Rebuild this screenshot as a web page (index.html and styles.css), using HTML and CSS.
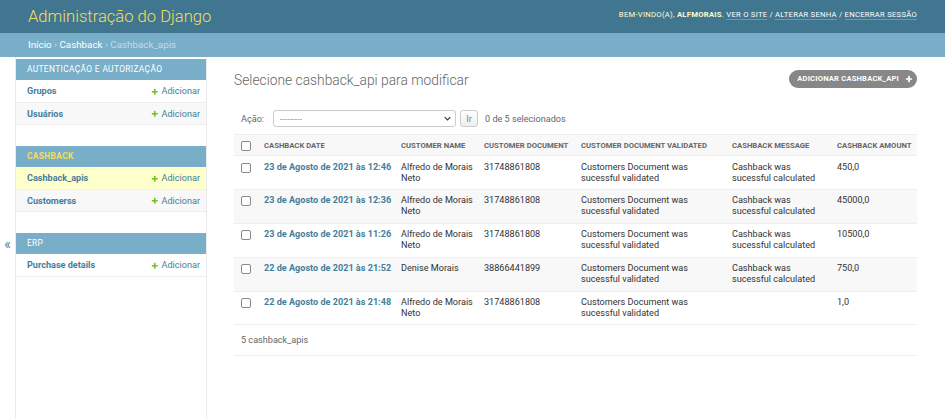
FILE: index.html
```html
<!DOCTYPE html>
<html lang="pt-br">
<head>
<meta charset="utf-8">
<title>Selecione cashback_api para modificar | Administração do Django</title>
<link rel="stylesheet" href="styles.css">
</head>
<body>
<header class="header">
  <h1 class="site-name"><a href="#">Administração do Django</a></h1>
  <div class="user-tools">Bem-vindo(a), <strong>alfmorais</strong>. <a href="#">Ver o site</a> / <a href="#">Alterar senha</a> / <a href="#">Encerrar sessão</a></div>
</header>
<div class="breadcrumbs"><a href="#">Início</a> › <a href="#">Cashback</a> › Cashback_apis</div>
<div class="main">
  <button class="toggle-nav" type="button">«</button>
  <nav class="sidebar">
    <div class="module">
      <div class="caption">Autenticação e Autorização</div>
      <div class="row"><a class="model" href="#">Grupos</a><a class="addlink" href="#"><svg class="plus" viewBox="0 0 1792 1792"><path fill="#70bf2b" d="M1600 796v192q0 40-28 68t-68 28h-416v416q0 40-28 68t-68 28h-192q-40 0-68-28t-28-68v-416h-416q-40 0-68-28t-28-68v-192q0-40 28-68t68-28h416v-416q0-40 28-68t68-28h192q40 0 68 28t28 68v416h416q40 0 68 28t28 68z"/></svg>Adicionar</a></div>
      <div class="row alt"><a class="model" href="#">Usuários</a><a class="addlink" href="#"><svg class="plus" viewBox="0 0 1792 1792"><path fill="#70bf2b" d="M1600 796v192q0 40-28 68t-68 28h-416v416q0 40-28 68t-68 28h-192q-40 0-68-28t-28-68v-416h-416q-40 0-68-28t-28-68v-192q0-40 28-68t68-28h416v-416q0-40 28-68t68-28h192q40 0 68 28t28 68v416h416q40 0 68 28t28 68z"/></svg>Adicionar</a></div>
    </div>
    <div class="module">
      <div class="caption current">Cashback</div>
      <div class="row selected"><a class="model" href="#">Cashback_apis</a><a class="addlink" href="#"><svg class="plus" viewBox="0 0 1792 1792"><path fill="#70bf2b" d="M1600 796v192q0 40-28 68t-68 28h-416v416q0 40-28 68t-68 28h-192q-40 0-68-28t-28-68v-416h-416q-40 0-68-28t-28-68v-192q0-40 28-68t68-28h416v-416q0-40 28-68t68-28h192q40 0 68 28t28 68v416h416q40 0 68 28t28 68z"/></svg>Adicionar</a></div>
      <div class="row alt"><a class="model" href="#">Customerss</a><a class="addlink" href="#"><svg class="plus" viewBox="0 0 1792 1792"><path fill="#70bf2b" d="M1600 796v192q0 40-28 68t-68 28h-416v416q0 40-28 68t-68 28h-192q-40 0-68-28t-28-68v-416h-416q-40 0-68-28t-28-68v-192q0-40 28-68t68-28h416v-416q0-40 28-68t68-28h192q40 0 68 28t28 68v416h416q40 0 68 28t28 68z"/></svg>Adicionar</a></div>
    </div>
    <div class="module">
      <div class="caption">ERP</div>
      <div class="row"><a class="model" href="#">Purchase details</a><a class="addlink" href="#"><svg class="plus" viewBox="0 0 1792 1792"><path fill="#70bf2b" d="M1600 796v192q0 40-28 68t-68 28h-416v416q0 40-28 68t-68 28h-192q-40 0-68-28t-28-68v-416h-416q-40 0-68-28t-28-68v-192q0-40 28-68t68-28h416v-416q0-40 28-68t68-28h192q40 0 68 28t28 68v416h416q40 0 68 28t28 68z"/></svg>Adicionar</a></div>
    </div>
  </nav>
  <div class="content">
    <div class="content-head">
      <h1 class="page-title">Selecione cashback_api para modificar</h1>
      <a class="object-tool" href="#">Adicionar cashback_api<svg class="plus-w" viewBox="0 0 1792 1792"><path fill="#fff" d="M1600 796v192q0 40-28 68t-68 28h-416v416q0 40-28 68t-68 28h-192q-40 0-68-28t-28-68v-416h-416q-40 0-68-28t-28-68v-192q0-40 28-68t68-28h416v-416q0-40 28-68t68-28h192q40 0 68 28t28 68v416h416q40 0 68 28t28 68z"/></svg></a>
    </div>
    <div class="changelist">
      <div class="actions">
        <label class="action-label">Ação:</label>
        <span class="select-wrap">
          <select class="action-select"><option>---------</option></select>
          <svg class="chev" viewBox="0 0 10 6"><path d="M1 1l4 4 4-4" fill="none" stroke="#333" stroke-width="1.6"/></svg>
        </span>
        <button class="go" type="button">Ir</button>
        <span class="counter">0 de 5 selecionados</span>
      </div>
      <table class="results">
        <colgroup>
          <col class="c0"><col class="c1"><col class="c2"><col class="c3"><col class="c4"><col class="c5"><col class="c6">
        </colgroup>
        <thead>
          <tr>
            <th class="check"><span class="cb"></span></th>
            <th>Cashback date</th>
            <th>Customer name</th>
            <th>Customer document</th>
            <th>Customer document validated</th>
            <th>Cashback message</th>
            <th>Cashback amount</th>
          </tr>
        </thead>
        <tbody>
          <tr>
            <td class="check"><span class="cb"></span></td>
            <th><a href="#">23 de Agosto de 2021 às 12:46</a></th>
            <td class="name">Alfredo de Morais Neto</td>
            <td>31748861808</td>
            <td class="validated">Customers Document was sucessful validated</td>
            <td class="message">Cashback was sucessful calculated</td>
            <td>450,0</td>
          </tr>
          <tr class="alt">
            <td class="check"><span class="cb"></span></td>
            <th><a href="#">23 de Agosto de 2021 às 12:36</a></th>
            <td class="name">Alfredo de Morais Neto</td>
            <td>31748861808</td>
            <td class="validated">Customers Document was sucessful validated</td>
            <td class="message">Cashback was sucessful calculated</td>
            <td>45000,0</td>
          </tr>
          <tr>
            <td class="check"><span class="cb"></span></td>
            <th><a href="#">23 de Agosto de 2021 às 11:26</a></th>
            <td class="name">Alfredo de Morais Neto</td>
            <td>31748861808</td>
            <td class="validated">Customers Document was sucessful validated</td>
            <td class="message">Cashback was sucessful calculated</td>
            <td>10500,0</td>
          </tr>
          <tr class="alt">
            <td class="check"><span class="cb"></span></td>
            <th><a href="#">22 de Agosto de 2021 às 21:52</a></th>
            <td class="name">Denise Morais</td>
            <td>38866441899</td>
            <td class="validated">Customers Document was sucessful validated</td>
            <td class="message">Cashback was sucessful calculated</td>
            <td>750,0</td>
          </tr>
          <tr>
            <td class="check"><span class="cb"></span></td>
            <th><a href="#">22 de Agosto de 2021 às 21:48</a></th>
            <td class="name">Alfredo de Morais Neto</td>
            <td>31748861808</td>
            <td class="validated">Customers Document was sucessful validated</td>
            <td class="message"></td>
            <td>1,0</td>
          </tr>
        </tbody>
      </table>
      <p class="paginator">5 cashback_apis</p>
    </div>
  </div>
</div>
</body>
</html>
```

FILE: styles.css
```css
* { box-sizing: border-box; }
html, body { margin: 0; padding: 0; }
body {
  font-family: Roboto, "Lucida Grande", "DejaVu Sans", "Liberation Sans", sans-serif;
  font-size: 9.8px;
  color: #333;
  background: #fff;
}
a { text-decoration: none; color: #447e9b; }

.header {
  height: 33px;
  background: #417690;
  padding: 0 28px;
  display: flex;
  align-items: center;
  justify-content: space-between;
}
.site-name {
  margin: 0;
  font-size: 16.6px;
  font-weight: 300;
  line-height: 20px;
}
.site-name a { color: #f5dd5d; }
.user-tools {
  font-size: 7.7px;
  letter-spacing: 0.25px;
  text-transform: uppercase;
  color: #ffc;
  margin-top: -4px;
}
.user-tools strong { font-weight: 700; }
.user-tools a {
  color: #fff;
  border-bottom: 1px solid rgba(255,255,255,0.25);
}

.breadcrumbs {
  height: 24px;
  line-height: 24px;
  background: #79aec8;
  padding: 0 28px;
  color: #c4dce8;
  font-size: 9.8px;
}
.breadcrumbs a { color: #fff; }

.main {
  display: flex;
  min-height: calc(100vh - 57px);
}
.toggle-nav {
  flex: 0 0 16px;
  width: 16px;
  border: 0;
  border-right: 1px solid #eaeaea;
  background: #fff;
  color: #447e9b;
  font-family: inherit;
  font-size: 14px;
  padding: 177px 0 0;
  margin: 0;
  display: flex;
  justify-content: center;
  align-items: flex-start;
  line-height: 20px;
}
.sidebar {
  flex: 0 0 191px;
  border-right: 1px solid #eaeaea;
  padding-top: 2px;
}
.module { margin-bottom: 21px; }
.caption {
  height: 21px;
  line-height: 21px;
  background: #79aec8;
  color: #fff;
  padding-left: 11px;
  font-size: 8.4px;
  letter-spacing: 0.35px;
  text-transform: uppercase;
}
.caption.current { color: #f5dd5d; font-weight: 700; }
.row {
  height: 22.5px;
  display: flex;
  align-items: center;
  justify-content: space-between;
  padding: 1px 6px 0 11px;
  border-bottom: 1px solid #eee;
  background: #fff;
  font-size: 9.1px;
}
.row.alt { background: #f8f8f8; }
.row.selected { background: #ffc; }
.model { font-weight: 700; }
.addlink { display: flex; align-items: center; }
.plus { width: 7.5px; height: 7.5px; margin-right: 3px; }

.content {
  flex: 1;
  padding: 14px 28px 20px 27px;
  min-width: 0;
}
.content-head {
  display: flex;
  justify-content: space-between;
  align-items: flex-start;
  margin-bottom: 14px;
}
.page-title {
  margin: 0;
  font-size: 13.8px;
  font-weight: 300;
  line-height: 18px;
  color: #666;
}
.object-tool {
  margin-top: -1px;
  height: 18px;
  line-height: 18px;
  background: #878787;
  color: #fff;
  border-radius: 10px;
  padding: 0 4px 0 8px;
  font-size: 7.6px;
  font-weight: 700;
  letter-spacing: 0.2px;
  text-transform: uppercase;
  display: flex;
  align-items: center;
}
.plus-w { width: 8px; height: 8px; margin-left: 6px; }

.actions {
  display: flex;
  align-items: center;
  padding: 7px 7px;
  height: 31px;
  color: #666;
  font-size: 9.1px;
}
.action-label { margin-right: 9px; }
.select-wrap { position: relative; display: inline-block; }
.action-select {
  -webkit-appearance: none;
  appearance: none;
  width: 183px;
  height: 17px;
  border: 1px solid #ccc;
  border-radius: 3px;
  background: #fff;
  font-family: "DejaVu Sans", sans-serif;
  font-size: 6px;
  letter-spacing: 0.3px;
  color: #333;
  padding: 0 6px;
  margin: 0;
}
.chev {
  position: absolute;
  right: 5px;
  top: 6px;
  width: 7px;
  height: 5px;
}
.go {
  margin: 0 0 0 4px;
  height: 17px;
  width: 18px;
  padding: 0;
  border: 1px solid #ccc;
  border-radius: 3px;
  background: linear-gradient(#fff, #eee);
  color: #5b8aa3;
  font-family: inherit;
  font-size: 9px;
}
.counter { margin-left: 7px; }

.results {
  width: 100%;
  border-collapse: collapse;
  table-layout: fixed;
  font-size: 9.1px;
}
.c0 { width: 30px; }
.c1 { width: 137px; }
.c2 { width: 83px; }
.c3 { width: 97px; }
.c4 { width: 151px; }
.c5 { width: 105px; }
.c6 { width: 80px; }
.results thead th {
  background: #f8f8f8;
  border-top: 1px solid #eee;
  border-bottom: 1px solid #eee;
  padding: 5px 4px 4px 0;
  line-height: 11px;
  font-size: 7.7px;
  font-weight: 700;
  color: #666;
  text-transform: uppercase;
  text-align: left;
  white-space: nowrap;
  overflow: hidden;
}
.results thead th.check { padding-left: 7px; }
.results tbody td, .results tbody th {
  padding: 5.5px 6px 5.4px 0;
  line-height: 11px;
  border-bottom: 1px solid #eee;
  vertical-align: top;
  text-align: left;
  font-weight: 400;
  color: #333;
}
.results tbody th { font-weight: 700; white-space: nowrap; }
.results tbody td.check { padding-left: 7px; padding-top: 6.5px; }
.results tbody td.validated { padding-right: 16px; }
.results tbody td.message { padding-right: 12px; }
.results tbody tr.alt td, .results tbody tr.alt th { background: #f8f8f8; }
.cb {
  display: block;
  width: 10px;
  height: 10px;
  border: 1px solid #8a8a8a;
  border-radius: 2px;
  background: #fff;
}

.paginator {
  margin: 0;
  padding: 7px 7px;
  line-height: 16px;
  font-size: 9.1px;
  color: #666;
  border-bottom: 1px solid #eee;
}
```
